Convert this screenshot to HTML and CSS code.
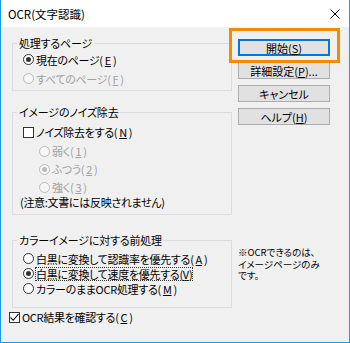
FILE: index.html
```html
<!DOCTYPE html>
<html>
<head>
    <title>OCR(文字認識)</title>
    <link rel="stylesheet" href="styles.css">
</head>
<body>
    <div class="window">
        <div class="titlebar">
            <span class="title">OCR(文字認識)</span>
            <svg class="close" width="10" height="10" viewBox="0 0 10 10">
                <path d="M0.5 0.5 L9.5 9.5 M9.5 0.5 L0.5 9.5" stroke="#000" stroke-width="1" fill="none"/>
            </svg>
        </div>

        <div class="content">
            <div class="left">
                <fieldset class="group group-pages">
                    <legend>処理するページ</legend>
                    <div class="row"><span class="radio checked"></span>現在のページ(<u>E</u>)</div>
                    <div class="row disabled"><span class="radio"></span>すべてのページ(<u>F</u>)</div>
                </fieldset>

                <fieldset class="group group-noise">
                    <legend>イメージのノイズ除去</legend>
                    <div class="row check-row"><span class="check"></span>ノイズ除去をする(<u>N</u>)</div>
                    <div class="row sub disabled"><span class="radio"></span>弱く(<u>1</u>)</div>
                    <div class="row sub disabled"><span class="radio checked"></span>ふつう(<u>2</u>)</div>
                    <div class="row sub disabled"><span class="radio"></span>強く(<u>3</u>)</div>
                    <div class="row note">(注意:文書には反映されません)</div>
                </fieldset>

                <fieldset class="group group-color">
                    <legend>カラーイメージに対する前処理</legend>
                    <div class="row"><span class="radio"></span>白黒に変換して認識率を優先する(<u>A</u>)</div>
                    <div class="row"><span class="radio checked"></span><span class="focus">白黒に変換して速度を優先する(<u>V</u>)</span></div>
                    <div class="row"><span class="radio"></span>カラーのままOCR処理する(<u>M</u>)</div>
                </fieldset>

                <div class="row confirm"><span class="check checked">
                    <svg width="9" height="9" viewBox="0 0 9 9"><path d="M0.5 4.5 L3.2 7.3 L8.5 1" stroke="#000" stroke-width="1.1" fill="none"/></svg>
                </span>OCR結果を確認する(<u>C</u>)</div>
            </div>

            <div class="right">
                <div class="buttons">
                    <button class="default">開始(<u>S</u>)</button>
                    <button>詳細設定(<u>P</u>)...</button>
                    <button>キャンセル</button>
                    <button>ヘルプ(<u>H</u>)</button>
                </div>
                <div class="hint">
                    <div>※OCRできるのは、</div>
                    <div>イメージページのみ</div>
                    <div>です。</div>
                </div>
            </div>
        </div>

        <div class="highlight"></div>
    </div>
</body>
</html>
```

FILE: styles.css
```css
body {
    margin: 0;
    font-family: "Noto Sans CJK JP", "Noto Sans", sans-serif;
    font-size: 11px;
    font-feature-settings: "palt";
    color: #000;
}
.window {
    position: relative;
    width: 350px;
    height: 343px;
    box-sizing: border-box;
    border: 1px solid #1a9be0;
    border-top: none;
    background-color: #f0f0f0;
}
.titlebar {
    height: 27px;
    background-color: #fff;
    display: flex;
    align-items: center;
    justify-content: space-between;
    padding: 0 9px 0 7px;
}
.title {
    font-size: 11.5px;
}
.close {
    margin-top: 1px;
}
.content {
    display: flex;
    gap: 6px;
    padding: 9px 0 0 8px;
}
.left {
    width: 223px;
}
.group {
    width: 220px;
    box-sizing: border-box;
    margin: 0 0 0 3px;
    padding: 0;
    border: 1px solid #dcdcdc;
    min-width: 0;
}
.group legend {
    margin-left: 4px;
    padding: 0 2px;
    line-height: 14px;
    letter-spacing: -0.2px;
}
.row {
    display: flex;
    align-items: center;
    gap: 2px;
    white-space: nowrap;
    letter-spacing: -0.3px;
}
.group-pages .row {
    height: 19px;
    padding-left: 10px;
}
.group-pages {
    padding-bottom: 2px;
}
.group-noise {
    margin-top: 14px;
    padding-top: 3px;
    padding-bottom: 6px;
}
.group-noise .row {
    height: 18px;
    padding-left: 10px;
}
.group-noise .check-row {
    height: 20px;
}
.group-noise .sub {
    padding-left: 26px;
}
.group-noise .note {
    height: 12px;
    padding-left: 7px;
}
.group-color {
    margin-top: 18px;
    padding-top: 4px;
    padding-bottom: 11px;
}
.group-color .row {
    height: 15px;
    padding-left: 10px;
}
.confirm {
    height: 16px;
    padding-top: 1px;
}
.disabled {
    color: #a0a0a0;
}
.radio {
    width: 11px;
    height: 11px;
    box-sizing: border-box;
    border: 1px solid #333;
    border-radius: 50%;
    background-color: #fff;
    display: flex;
    align-items: center;
    justify-content: center;
    flex-shrink: 0;
}
.radio.checked::after {
    content: "";
    width: 5px;
    height: 5px;
    border-radius: 50%;
    background-color: #333;
}
.disabled .radio {
    border-color: #bcbcbc;
    background-color: #f7f7f7;
}
.disabled .radio.checked::after {
    background-color: #bcbcbc;
}
.check {
    width: 11px;
    height: 11px;
    box-sizing: border-box;
    border: 1px solid #333;
    background-color: #fff;
    display: flex;
    align-items: center;
    justify-content: center;
    flex-shrink: 0;
}
.focus {
    outline: 1px dotted #333;
    outline-offset: 0;
    line-height: 12px;
}
.right {
    width: 92px;
    padding-top: 3px;
}
.buttons {
    display: flex;
    flex-direction: column;
    gap: 6px;
}
button {
    height: 17px;
    padding: 0;
    font-family: inherit;
    font-size: 11px;
    font-feature-settings: "palt";
    line-height: 14px;
    color: #000;
    background-color: #e1e1e1;
    border: 1px solid #adadad;
}
button.default {
    border-color: #0078d7;
    box-shadow: inset 0 0 0 1px #0078d7;
}
.hint {
    margin-top: 122px;
    font-size: 9.5px;
    line-height: 11.5px;
    white-space: nowrap;
}
.highlight {
    position: absolute;
    left: 228px;
    top: 28px;
    width: 111px;
    height: 35px;
    box-sizing: border-box;
    border: 3px solid #f28c00;
}
```
